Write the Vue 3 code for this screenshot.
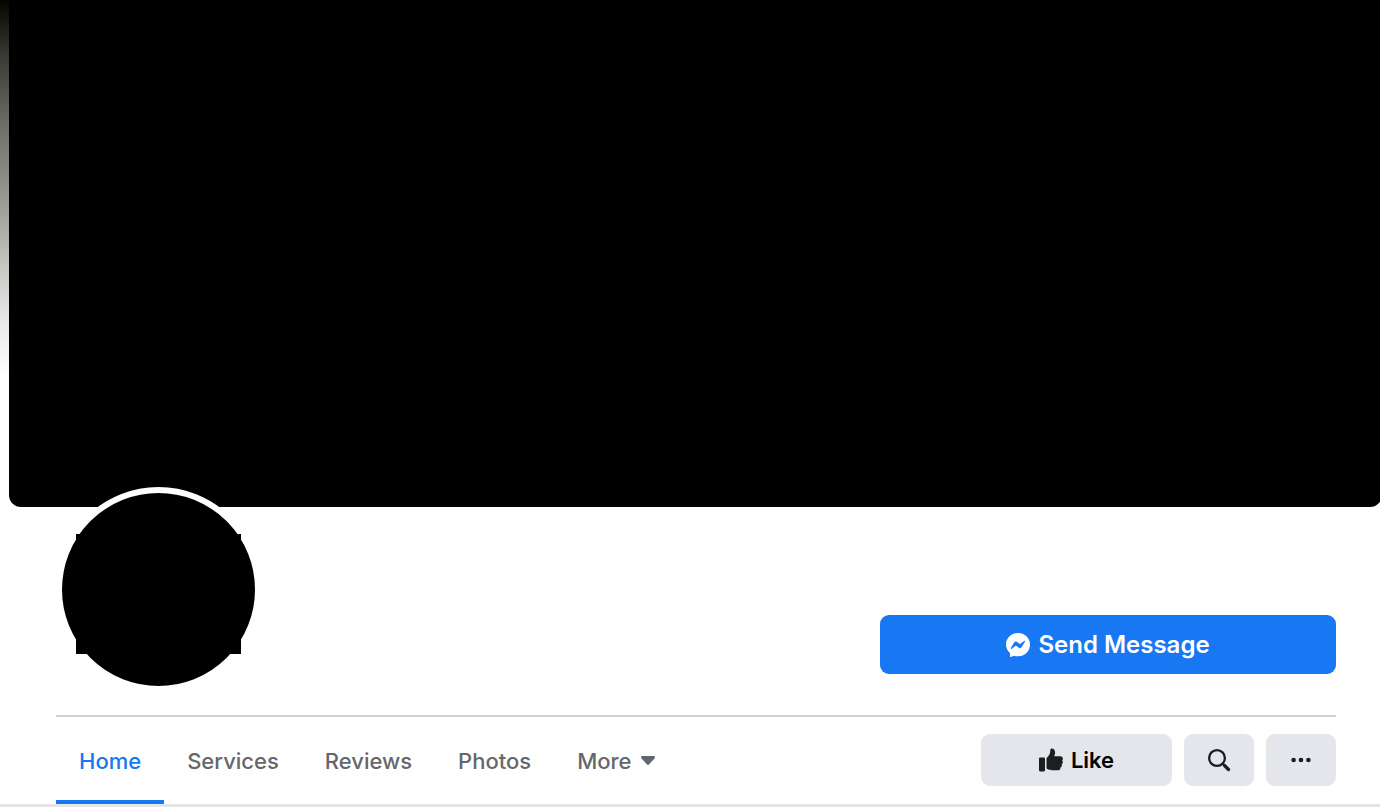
<script setup>
import { ref } from 'vue'

const tabs = ['Home', 'Services', 'Reviews', 'Photos']
const active = ref('Home')
</script>

<template>
  <div class="page">
    <div class="backdrop">
      <div class="cover" role="img" aria-label="Cover photo"></div>
    </div>

    <main class="content">
      <header class="profile">
        <div class="avatar" role="img" aria-label="Profile picture"></div>
        <button type="button" class="message">
          <svg width="24" height="24" viewBox="0 0 24 24" aria-hidden="true">
            <path fill="#fff" d="M12 0C5.200 0 0 4.900 0 11.500c0 3.500 1.500 6.500 4 8.500v3.200c0 .6.500.9 1 .7l2.700-1.200c1.400.4 2.800.6 4.300.6 6.800 0 12-5 12-11.800C24 4.900 18.800 0 12 0Z" />
            <path fill="#1877f2" d="m4.800 14.900 3.500-5.600c.6-.9 1.700-1.100 2.600-.5l2.500 1.900c.3.200.7.200 1 0l3.700-2.800c.6-.4 1.300.2.900.9l-3.500 5.500c-.6.900-1.700 1.100-2.600.5l-2.500-1.900c-.3-.2-.7-.2-1 0l-3.700 2.900c-.6.400-1.300-.2-.9-.9Z" />
          </svg>
          Send Message
        </button>
      </header>

      <div class="bar">
        <nav class="tabs" aria-label="Page sections">
          <a
            v-for="tab in tabs"
            :key="tab"
            href="#"
            class="tab"
            :class="{ active: tab === active }"
            @click.prevent="active = tab"
          >{{ tab }}</a>
          <button type="button" class="tab more">
            More
            <svg width="14" height="10" viewBox="0 0 14 10" aria-hidden="true">
              <path fill="#606770" d="M1.400 0h11.200c1.300 0 1.800 1.500.9 2.400L8.200 8.200c-.7.700-1.700.7-2.400 0L.5 2.400C-.4 1.500.1 0 1.400 0Z" />
            </svg>
          </button>
        </nav>
        <div class="actions">
          <button type="button" class="action like">
            <svg width="24" height="24" viewBox="0 0 24 24" aria-hidden="true">
              <path fill="#1c1e21" d="M1.200 9.500h3.600C5.500 9.500 6 10 6 10.700v11.600c0 .7-.5 1.200-1.200 1.200H1.200C.5 23.500 0 23 0 22.300V10.700C0 10 .5 9.500 1.200 9.500Z" />
              <path fill="#1c1e21" d="M7.500 11c0-.7.300-1.200.8-1.700 1.700-1.600 2.700-3.300 2.900-5.600l.1-1.700c.1-.9.700-1.500 1.600-1.500 2 0 3.200 1.700 3.200 4.100 0 1.500-.4 2.700-.9 3.700h6.200c1.400 0 2.500 1.100 2.500 2.400 0 .8-.3 1.400-.7 1.900.4.400.6 1 .6 1.600 0 .9-.5 1.700-1.200 2.100.2.300.3.700.3 1.100 0 1-.7 1.900-1.600 2.100.1.200.1.400.1.700 0 1.200-1 2.100-2.300 2.100h-5.900c-2 0-3.500-.4-4.900-1.200-.5-.3-.8-.7-.8-1.300Z" />
            </svg>
            Like
          </button>
          <button type="button" class="action square" aria-label="Search">
            <svg width="24" height="24" viewBox="0 0 24 24" fill="none" stroke="#1c1e21" stroke-linecap="round" aria-hidden="true">
              <circle cx="10" cy="10" r="7.900" stroke-width="2.300" />
              <path d="m15.800 15.800 2 2" stroke-width="2.300" />
              <path d="m17.500 17.500 4 4" stroke-width="3.200" />
            </svg>
          </button>
          <button type="button" class="action square" aria-label="More options">
            <svg width="24" height="24" viewBox="0 0 24 24" fill="#1c1e21" aria-hidden="true">
              <circle cx="4.600" cy="12" r="2.300" />
              <circle cx="12" cy="12" r="2.300" />
              <circle cx="19.400" cy="12" r="2.300" />
            </svg>
          </button>
        </div>
      </div>
    </main>
    <div class="below"></div>
  </div>
</template>

<style>
body {
  margin: 0;
  background: #fff;
}
</style>

<style scoped>
.page {
  overflow: hidden;
  font-family: Inter, "Liberation Sans", sans-serif;
  background: #fff;
}
.backdrop {
  padding-left: 9px;
  background: linear-gradient(#050500 0, #3c3c38 60px, #6e6e68 125px, #9a9a94 200px, #c8c8c4 270px, #e8e8e7 320px, #fff 375px);
}
.cover {
  height: 507px;
  margin-right: -2px;
  border-radius: 0 0 12px 12px;
  background: #000;
}
.content {
  padding: 0 44px 0 56px;
}
.profile {
  display: flex;
  align-items: flex-start;
  justify-content: space-between;
  height: 208px;
  border-bottom: 2px solid #ced0d4;
}
.avatar {
  position: relative;
  width: 193px;
  height: 193px;
  margin-top: -20px;
  border: 6px solid #fff;
  border-radius: 50%;
  background: #000;
}
.avatar::after {
  content: "";
  position: absolute;
  inset: 41px 14px 32px 14px;
  background: #000;
}
.message {
  display: flex;
  align-items: center;
  justify-content: center;
  gap: 8px;
  width: 456px;
  height: 59px;
  margin: 108px 0 0;
  padding: 0;
  border: 0;
  border-radius: 9px;
  background: #1877f2;
  color: #fff;
  font: 600 24px/32px Inter, "Liberation Sans", sans-serif;
}
.bar {
  display: flex;
  justify-content: space-between;
}
.tabs {
  display: flex;
  height: 87px;
}
.tab {
  display: flex;
  align-items: center;
  padding: 4px 23px 0;
  border: 0;
  border-bottom: 4px solid transparent;
  background: none;
  color: #65676b;
  font: 500 22px/28px Inter, "Liberation Sans", sans-serif;
  text-decoration: none;
  box-sizing: border-box;
}
.tab.active {
  border-bottom-color: #1877f2;
  color: #1877f2;
}
.more {
  gap: 9px;
}
.actions {
  display: flex;
  gap: 12px;
  padding-top: 17px;
}
.action {
  display: flex;
  align-items: center;
  justify-content: center;
  gap: 8px;
  height: 52px;
  padding: 0;
  border: 0;
  border-radius: 9px;
  background: #e4e6eb;
  color: #050505;
  font: 600 22px/28px Inter, "Liberation Sans", sans-serif;
}
.like {
  width: 191px;
}
.square {
  width: 70px;
}
.below {
  height: 3px;
  background: #e4e5e8;
}
</style>
